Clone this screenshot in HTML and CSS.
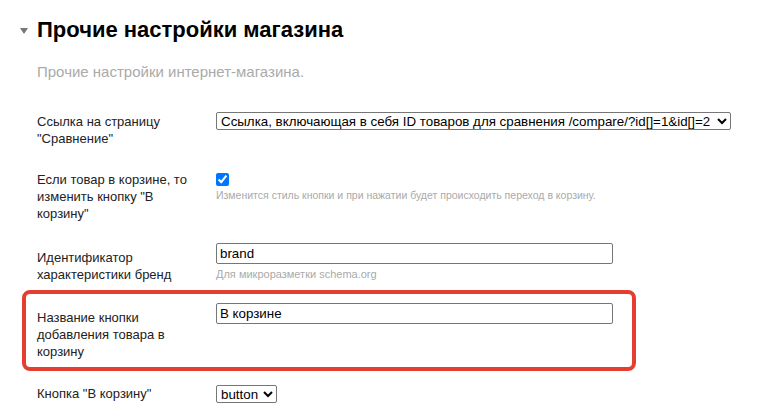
FILE: index.html
```html
<!DOCTYPE html>
<html lang="ru">
<head>
<meta charset="utf-8">
<link rel="stylesheet" href="styles.css">
</head>
<body>
<div class="page">
  <h2 class="title"><span class="caret"></span>Прочие настройки магазина</h2>
  <p class="subtitle">Прочие настройки интернет-магазина.</p>

  <div class="row row-compare">
    <div class="label">Ссылка на страницу "Сравнение"</div>
    <div class="value">
      <select class="select select-wide">
        <option>Ссылка, включающая в себя ID товаров для сравнения /compare/?id[]=1&amp;id[]=2</option>
      </select>
    </div>
  </div>

  <div class="row row-incart">
    <div class="label">Если товар в корзине, то изменить кнопку "В корзину"</div>
    <div class="value">
      <input type="checkbox" class="check" checked>
      <div class="hint hint-small">Изменится стиль кнопки и при нажатии будет происходить переход в корзину.</div>
    </div>
  </div>

  <div class="row row-brand">
    <div class="label label-low">Идентификатор характеристики бренд</div>
    <div class="value">
      <input type="text" class="text" value="brand">
      <div class="hint hint-tight">Для микроразметки schema.org</div>
    </div>
  </div>

  <div class="highlight">
    <div class="row row-name">
      <div class="label label-low">Название кнопки добавления товара в корзину</div>
      <div class="value">
        <input type="text" class="text" value="В корзине">
      </div>
    </div>
  </div>

  <div class="row row-button">
    <div class="label">Кнопка "В корзину"</div>
    <div class="value">
      <select class="select select-small">
        <option>button</option>
      </select>
    </div>
  </div>
</div>
</body>
</html>
```

FILE: styles.css
```css
html, body {
  margin: 0;
  padding: 0;
  background: #ffffff;
}

body {
  font-family: "Liberation Sans", Arial, sans-serif;
  color: #222222;
  font-size: 13px;
  line-height: 17px;
}

.page {
  width: 760px;
  height: 415px;
  overflow: hidden;
}

.title {
  display: flex;
  align-items: center;
  gap: 9px;
  margin: 17px 0 0 0;
  padding-left: 20px;
  font-size: 22px;
  line-height: 25px;
  font-weight: bold;
  color: #000000;
}

.caret {
  width: 0;
  height: 0;
  margin-top: 2px;
  border-left: 4px solid transparent;
  border-right: 4px solid transparent;
  border-top: 6px solid #777777;
}

.subtitle {
  margin: 21px 0 0 0;
  padding-left: 37px;
  font-size: 15px;
  line-height: 18px;
  color: #aaaaaa;
}

.row {
  display: grid;
  grid-template-columns: 165px 1fr;
  column-gap: 14px;
  align-items: start;
  padding-left: 37px;
  box-sizing: border-box;
}

.row-compare {
  margin-top: 31px;
  height: 59px;
}

.row-compare .label {
  padding-top: 1px;
}

.row-incart {
  height: 72px;
}

.row-brand {
  height: 47px;
}

.label {
  color: #222222;
}

.label-low {
  padding-top: 6px;
}

.value {
  display: flex;
  flex-direction: column;
  align-items: flex-start;
}

.select {
  font-family: "Liberation Sans", Arial, sans-serif;
  font-size: 13.33px;
  height: 18px;
  margin: 0;
  color: #000000;
  background: #ffffff;
  border: 1px solid #767676;
  border-radius: 2px;
}

.select-wide {
  width: 515px;
}

.select-small {
  width: 61px;
}

.check {
  margin: 2px 0 0 0;
  width: 13px;
  height: 13px;
}

.hint {
  margin-top: 2px;
  font-size: 11px;
  line-height: 14px;
  color: #aaaaaa;
}

.hint-small {
  font-size: 10.5px;
}

.hint-tight {
  margin-top: 3px;
}

.text {
  box-sizing: border-box;
  width: 397px;
  height: 21px;
  margin: 0;
  padding: 1px 3px;
  font-family: "Liberation Sans", Arial, sans-serif;
  font-size: 13.33px;
  color: #000000;
  border: 1px solid #767676;
  border-radius: 2px;
}

.highlight {
  box-sizing: border-box;
  width: 614px;
  height: 81px;
  margin-left: 22px;
  border: 4px solid #e53e30;
  border-radius: 8px;
}

.row-name {
  padding-left: 11px;
  padding-top: 9px;
}

.row-button {
  margin-top: 14px;
}
```
